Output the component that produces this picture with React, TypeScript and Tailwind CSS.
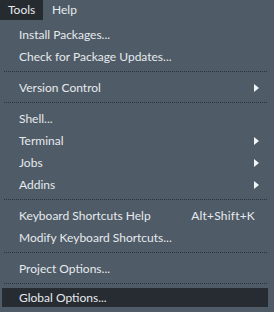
import { ReactNode } from "react";

type Item =
  | { kind: "item"; label: string; shortcut?: string; submenu?: boolean; active?: boolean }
  | { kind: "sep" };

const ITEMS: Item[] = [
  { kind: "item", label: "Install Packages..." },
  { kind: "item", label: "Check for Package Updates..." },
  { kind: "sep" },
  { kind: "item", label: "Version Control", submenu: true },
  { kind: "sep" },
  { kind: "item", label: "Shell..." },
  { kind: "item", label: "Terminal", submenu: true },
  { kind: "item", label: "Jobs", submenu: true },
  { kind: "item", label: "Addins", submenu: true },
  { kind: "sep" },
  { kind: "item", label: "Keyboard Shortcuts Help", shortcut: "Alt+Shift+K" },
  { kind: "item", label: "Modify Keyboard Shortcuts..." },
  { kind: "sep" },
  { kind: "item", label: "Project Options..." },
  { kind: "sep" },
  { kind: "item", label: "Global Options...", active: true },
];

const Arrow = () => (
  <svg width="5" height="8" viewBox="0 0 5 8" className="shrink-0">
    <path d="M0 0 L5 4 L0 8 Z" fill="#f2f4f6" />
  </svg>
);

const Row = ({ children, active }: { children: ReactNode; active?: boolean }) => (
  <div
    className={`ml-[2px] mr-[6px] flex items-center pl-[17px] pr-[9px] ${
      active ? "h-[19px] bg-[#262c32]" : "h-[22px]"
    }`}
  >
    {children}
  </div>
);

export default function App() {
  return (
    <div
      className="h-[312px] w-[274px] bg-[#4f5b66] text-[12px] text-[#e6eaee]"
      style={{ fontFamily: 'Lato, "Open Sans", sans-serif' }}
    >
      <div className="flex h-[20px] items-center">
        <div className="flex h-full w-[43px] items-center bg-[#262b30] pl-[8px]">Tools</div>
        <div className="pl-[9px]">Help</div>
      </div>
      <div className="pt-[4px]">
        {ITEMS.map((it, i) =>
          it.kind === "sep" ? (
            <div key={i} className={`px-[4px] pt-[3px] ${i === 14 ? "h-[8px]" : "h-[9px]"}`}>
              <div className="w-[263px] border-t border-dotted border-[#2a3137]" />
            </div>
          ) : (
            <Row key={i} active={it.active}>
              <span className="flex-1 whitespace-nowrap">{it.label}</span>
              {it.shortcut && (
                <span className="mr-[4px] whitespace-nowrap tracking-[0.2px]">{it.shortcut}</span>
              )}
              {it.submenu && <Arrow />}
            </Row>
          )
        )}
      </div>
    </div>
  );
}
